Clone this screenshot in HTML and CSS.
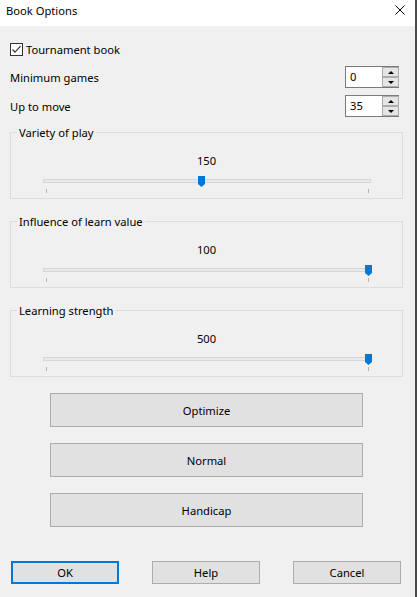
FILE: index.html
```html
<!DOCTYPE html>
<html>
<head>
<meta charset="utf-8">
<link rel="stylesheet" href="styles.css">
</head>
<body>
<div class="win">
  <div class="titlebar">
    <span class="title">Book Options</span>
    <svg class="close" viewBox="0 0 10 10"><path d="M0.5 0.5 L9.5 9.5 M9.5 0.5 L0.5 9.5" stroke="#000" stroke-width="1" fill="none"/></svg>
  </div>
  <div class="content">
    <label class="check-row">
      <span class="checkbox"><svg viewBox="0 0 11 11"><path d="M1.5 5.5 L4 8.2 L9.5 2.2" stroke="#333" stroke-width="1.2" fill="none"/></svg></span>
      <span>Tournament book</span>
    </label>
    <div class="spin-row r1">
      <span>Minimum games</span>
      <div class="spin"><div class="edit">0</div><div class="arrows"><div class="arr up"></div><div class="arr down"></div></div></div>
    </div>
    <div class="spin-row r2">
      <span>Up to move</span>
      <div class="spin"><div class="edit">35</div><div class="arrows"><div class="arr up"></div><div class="arr down"></div></div></div>
    </div>

    <div class="group">
      <span class="legend">Variety of play</span>
      <div class="val">150</div>
      <div class="slider"><div class="track"></div><svg class="thumb" style="left:155px" viewBox="0 0 7 11"><path d="M0 0 H7 V8 L3.5 11 L0 8 Z" fill="#0078d7"/></svg></div>
      <div class="ticks"><i></i><i></i></div>
    </div>
    <div class="group g2">
      <span class="legend">Influence of learn value</span>
      <div class="val">100</div>
      <div class="slider"><div class="track"></div><svg class="thumb" style="left:322px" viewBox="0 0 7 11"><path d="M0 0 H7 V8 L3.5 11 L0 8 Z" fill="#0078d7"/></svg></div>
      <div class="ticks"><i></i><i></i></div>
    </div>
    <div class="group g2">
      <span class="legend">Learning strength</span>
      <div class="val">500</div>
      <div class="slider"><div class="track"></div><svg class="thumb" style="left:322px" viewBox="0 0 7 11"><path d="M0 0 H7 V8 L3.5 11 L0 8 Z" fill="#0078d7"/></svg></div>
      <div class="ticks"><i></i><i></i></div>
    </div>

    <div class="opts">
      <button class="btn">Optimize</button>
      <button class="btn">Normal</button>
      <button class="btn">Handicap</button>
    </div>

    <div class="footer">
      <button class="fbtn ok">OK</button>
      <button class="fbtn">Help</button>
      <button class="fbtn">Cancel</button>
    </div>
  </div>
</div>
</body>
</html>
```
FILE: styles.css
```css
html, body {
  margin: 0;
  padding: 0;
}
body {
  width: 417px;
  height: 597px;
  background: #f0f0f0;
  font-family: "Noto Sans", "Open Sans", sans-serif;
  font-size: 11.2px;
  color: #000;
  overflow: hidden;
}
.win {
  height: 597px;
  box-sizing: border-box;
  border-right: 2px solid #4a4a4a;
}
.titlebar {
  height: 26px;
  background: #fff;
  display: flex;
  justify-content: space-between;
  align-items: flex-start;
  padding-left: 6px;
}
.title {
  line-height: 14px;
  margin-top: 4px;
}
.close {
  width: 10px;
  height: 10px;
  margin: 5px 10px 0 0;
}
.content {
  padding-left: 10px;
}
.check-row {
  display: flex;
  align-items: center;
  gap: 3px;
  height: 13px;
  margin-top: 17px;
}
.checkbox {
  width: 13px;
  height: 13px;
  box-sizing: border-box;
  border: 1px solid #333;
  background: #fff;
  display: flex;
}
.checkbox svg {
  width: 11px;
  height: 11px;
}
.spin-row {
  display: flex;
  justify-content: space-between;
  align-items: center;
  width: 389px;
  height: 22px;
}
.r1 { margin-top: 10px; }
.r2 { margin-top: 7px; }
.spin {
  display: flex;
  height: 22px;
}
.edit {
  width: 37px;
  box-sizing: border-box;
  border: 1px solid #7a7a7a;
  border-right: none;
  background: #fff;
  padding-left: 4px;
  line-height: 20px;
}
.arrows {
  width: 17px;
  display: flex;
  flex-direction: column;
  background: #fff;
  border-top: 1px solid #7a7a7a;
  border-bottom: 1px solid #7a7a7a;
  box-sizing: border-box;
  height: 22px;
}
.arr {
  flex: 1;
  box-sizing: border-box;
  border: 1px solid #adadad;
  background: #e5e5e5;
  display: flex;
  align-items: center;
  justify-content: center;
}
.arr::before {
  content: "";
  width: 0;
  height: 0;
  border-left: 3px solid transparent;
  border-right: 3px solid transparent;
}
.up::before { border-bottom: 3px solid #000; }
.down::before { border-top: 3px solid #000; }

.group {
  width: 393px;
  height: 67px;
  box-sizing: border-box;
  border: 1px solid #dcdcdc;
  margin-top: 15px;
}
.g2 { margin-top: 22px; }
.legend {
  display: block;
  width: fit-content;
  background: #f0f0f0;
  line-height: 14px;
  margin: -7px 0 0 6px;
  padding: 0 2px;
}
.val {
  text-align: center;
  line-height: 14px;
  margin-top: 14px;
}
.slider {
  position: relative;
  margin: 11px 0 0 32px;
  width: 328px;
  height: 4px;
}
.track {
  height: 4px;
  box-sizing: border-box;
  border: 1px solid #d6d6d6;
  background: #e7eaea;
}
.thumb {
  position: absolute;
  top: -3px;
  width: 7px;
  height: 11px;
}
.ticks {
  display: flex;
  justify-content: space-between;
  margin: 6px 0 0 35px;
  width: 323px;
  height: 4px;
}
.ticks i {
  width: 1px;
  height: 4px;
  background: #b4b4b4;
}
.opts {
  display: flex;
  flex-direction: column;
  gap: 16px;
  margin: 16px 0 0 40px;
}
.btn, .fbtn {
  font-family: inherit;
  font-size: 11.2px;
  color: #000;
  padding: 0;
  margin: 0;
  background: #e1e1e1;
  border: 1px solid #adadad;
  box-sizing: border-box;
}
.btn {
  width: 313px;
  height: 34px;
}
.footer {
  display: flex;
  gap: 33px;
  margin: 34px 0 0 1px;
}
.fbtn {
  width: 108px;
  height: 23px;
}
.ok {
  border: 2px solid #0078d7;
}
```
